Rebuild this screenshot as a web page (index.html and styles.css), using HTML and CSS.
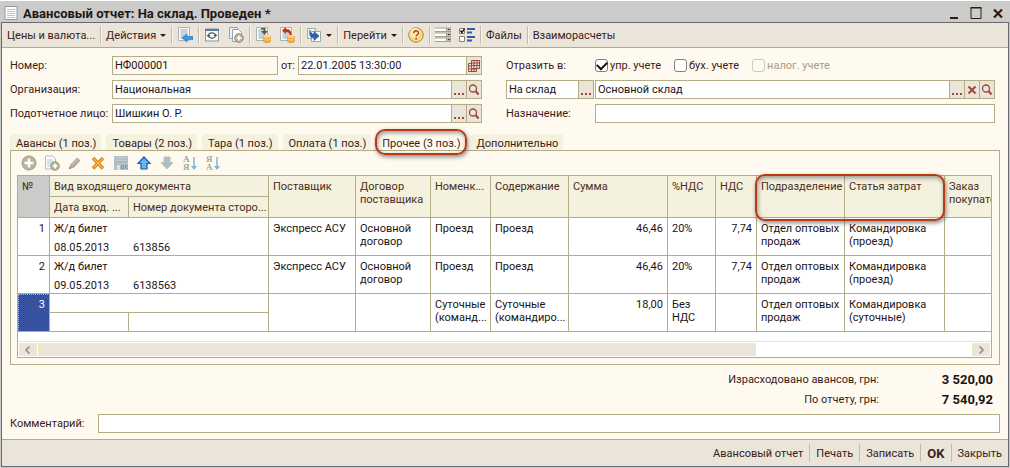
FILE: index.html
```
<!DOCTYPE html>
<html lang="ru">
<head>
  <meta charset="UTF-8">
  <meta name="viewport" content="width=device-width, initial-scale=1.0">
  <title>Авансовый отчет</title>
  <link rel="stylesheet" href="styles.css">
</head>
<body>
  <!-- Shared icons -->
  <svg class="sprite" aria-hidden="true">
    <symbol id="icon-search" viewBox="0 0 14 14">
      <circle cx="6" cy="5.500" r="3.500" fill="none" stroke="#9a4a3c" stroke-width="1.300"/>
      <path d="M8.500 8l3 3.500" stroke="#9a4a3c" stroke-width="2"/>
    </symbol>
    <symbol id="icon-dots" viewBox="0 0 14 14">
      <path d="M2 10h2v2H2zM6 10h2v2H6zM10 10h2v2h-2z" fill="#9a4a3c"/>
    </symbol>
    <symbol id="icon-sheet" viewBox="0 0 16 16">
      <path d="M1.500 .5h11v13h-11z" fill="#fdfdf8" stroke="#a9b3b5"/>
      <path d="M3.500 3h7M3.500 5h7M3.500 7h7M3.500 9h7M3.500 11h7" stroke="#8fa6b0"/>
    </symbol>
    <symbol id="icon-coins" viewBox="0 0 8 8">
      <path d="M.5 1.500v4.500c0 2 7 2 7 0V1.500z" fill="#f5a83a" stroke="#d98a24" stroke-width=".6"/>
      <path d="M.5 3.500c0 2 7 2 7 0" fill="none" stroke="#fbd68c"/>
      <ellipse cx="4" cy="1.700" rx="3.500" ry="1.400" fill="#fcd27c"/>
    </symbol>
  </svg>

  <!-- Title bar -->
  <header class="title-bar">
    <svg class="title-icon" viewBox="0 0 14 16">
      <path d="M1 1.500h12v13H1z" fill="#fff" stroke="#8d9ba0"/>
      <path d="M3 4.500h8M3 6.500h8M3 8.500h8M3 10.500h8M3 12.500h8" stroke="#a9cbd8"/>
    </svg>
    <h1>Авансовый отчет: На склад. Проведен *</h1>
    <div class="window-buttons">
      <button type="button" aria-label="Свернуть">
        <svg viewBox="0 0 12 12"><path d="M2 10h8v2H2z" fill="#341811"/></svg>
      </button>
      <button type="button" aria-label="Развернуть">
        <svg viewBox="0 0 12 12"><path d="M1 .5h10v11H1z" fill="none" stroke="#341811"/><path d="M.5 1h11" stroke="#341811"/></svg>
      </button>
      <button type="button" aria-label="Закрыть окно">
        <svg viewBox="0 0 12 12"><path d="M2 2.500l8 8M10 2.500l-8 8" stroke="#341811" stroke-width="2.200"/></svg>
      </button>
    </div>
  </header>

  <main class="window">
    <!-- Toolbar -->
    <nav class="toolbar">
      <div class="tool-group"><button type="button">Цены и валюта...</button></div>
      <div class="tool-group"><button type="button" class="menu">Действия</button></div>
      <div class="tool-group">
        <button type="button" aria-label="Перейти к документу">
          <svg viewBox="0 0 16 16"><use href="#icon-sheet"/><path d="M5 11l5-4v2.500h6v3h-6V15z" fill="#3f95dc" stroke="#2474b8" stroke-width=".6"/></svg>
        </button>
      </div>
      <div class="tool-group">
        <button type="button" aria-label="Обновить">
          <svg viewBox="0 0 16 16"><path d="M1.500 2h13v12h-13z" fill="#f6f8f4" stroke="#8096a0"/><path d="M1 3h14" stroke="#5b7c96" stroke-width="2"/><path d="M4.500 8c.5-2.500 5-3 6.500-.5M11.500 9c-.5 2.500-5 3-6.500 .5" fill="none" stroke="#45586a" stroke-width="1.200"/><path d="M2.500 8h4L4.500 10.500zM9.500 9h4l-2-2.500z" fill="#45586a"/></svg>
        </button>
        <button type="button" aria-label="Скопировать">
          <svg viewBox="0 0 16 16"><path d="M1.500 .5h8v11h-8z" fill="#eef3f2" stroke="#8ea6b2"/><path d="M4.500 2.500h6l3 3v9h-9z" fill="#fafcf8" stroke="#8ea6b2"/><circle cx="11" cy="11" r="4.300" fill="#bdb69a" stroke="#8e8a70"/><path d="M11 8.500v5M8.500 11h5" stroke="#fff" stroke-width="1.700"/></svg>
        </button>
      </div>
      <div class="tool-group">
        <button type="button" aria-label="Провести">
          <svg viewBox="0 0 16 16"><use href="#icon-sheet"/><path d="M6 1h4.500v3H13l-3.500 4L6 4h2.500V2.500H6z" fill="#5c5b5c"/><use href="#icon-coins" x="8" y="8" width="8" height="8"/></svg>
        </button>
        <button type="button" aria-label="Отменить проведение">
          <svg viewBox="0 0 16 16"><use href="#icon-sheet"/><path d="M3 3.500L7 0v2.300c4 0 5.500 2 5.500 5.700h-2C10.500 6 9.500 5 7 5v2z" fill="#c9300f"/><use href="#icon-coins" x="8" y="8" width="8" height="8"/></svg>
        </button>
      </div>
      <div class="tool-group">
        <button type="button" class="menu" aria-label="Ввести на основании">
          <svg viewBox="0 0 16 16"><path d="M1.500 1.500h8v10h-8z" fill="#f2f5f2" stroke="#9aa9ac"/><path d="M5.500 4.500h9v10h-9z" fill="#fdfdfa" stroke="#9aa9ac"/><path d="M4 3c0 3 1 4 4 4V4.500L13 9l-5 4.500V11C4.500 11 3 8 4 3z" fill="#2f62b4" stroke="#23498a" stroke-width=".6"/></svg>
        </button>
      </div>
      <div class="tool-group"><button type="button" class="menu">Перейти</button></div>
      <div class="tool-group">
        <button type="button" aria-label="Справка">
          <svg viewBox="0 0 16 16"><circle cx="8" cy="8" r="7.300" fill="#fbd67c" stroke="#a58b55"/><circle cx="7" cy="6" r="5" fill="#fdeab5"/><path d="M5.700 6.200c0-3.200 4.800-3 4.800-.3 0 1.700-2.300 1.700-2.300 3.600" fill="none" stroke="#b05a28" stroke-width="1.600"/><path d="M7.300 10.800h1.800v1.700H7.300z" fill="#b05a28"/></svg>
        </button>
      </div>
      <div class="tool-group">
        <button type="button" aria-label="Настройка списка">
          <svg viewBox="0 0 16 16"><path d="M0 .5h16v4.500H0zM0 5.500h16V10H0zM0 10.500h16V15H0z" fill="#a09d91"/><path d="M0 1.500h11v2.500H0zM0 6.500h11V9H0zM0 11.500h11V14H0z" fill="#fff"/><path d="M12 1.500h3v2.500h-3zM12 6.500h3V9h-3zM12 11.500h3V14h-3z" fill="#d5d2c6"/><path d="M12.500 2h2.500L13.700 3.500zM12.500 7h2.500l-1.300 1.500zM12.500 12h2.500l-1.300 1.500z" fill="#222"/></svg>
        </button>
        <button type="button" aria-label="Настройка полей">
          <svg viewBox="0 0 16 16"><path d="M.5 1.500h5v5h-5zM.5 9.500h5v5h-5z" fill="#fff" stroke="#8a8678"/><path d="M1.500 3.500l1.500 2 2.500-4" fill="none" stroke="#111" stroke-width="1.400"/><path d="M8 1h8v2H8zM8 4.500h5v2H8zM8 9h8v2H8zM8 12.500h5v2H8z" fill="#2d5bb5"/></svg>
        </button>
      </div>
      <div class="tool-group"><button type="button">Файлы</button></div>
      <div class="tool-group"><button type="button">Взаиморасчеты</button></div>
    </nav>

    <!-- Document header -->
    <form class="form">
      <div class="form-column">
        <div class="form-row">
          <label class="caption" for="number">Номер:</label>
          <div class="field readonly"><input type="text" id="number" value="НФ000001" readonly></div>
          <label class="from" for="date">от:</label>
          <div class="field date">
            <input type="text" id="date" value="22.01.2005 13:30:00">
            <button type="button" aria-label="Календарь">
              <svg viewBox="0 0 14 14"><path d="M4.500 1.500h8v8h-8zM4.500 4h8M4.500 6.500h8M7 1.500v8M10 1.500v8M1.500 4.500v8h8v-3M1.500 7h3M1.500 10h8M4.500 9.500v3M7 9.500v3M1.500 4.500h3" fill="none" stroke="#9a4a3c"/></svg>
            </button>
          </div>
        </div>
        <div class="form-row">
          <label class="caption" for="company">Организация:</label>
          <div class="field">
            <input type="text" id="company" value="Национальная">
            <button type="button" aria-label="Выбрать"><svg><use href="#icon-dots"/></svg></button>
            <button type="button" aria-label="Открыть"><svg><use href="#icon-search"/></svg></button>
          </div>
        </div>
        <div class="form-row">
          <label class="caption" for="person">Подотчетное лицо:</label>
          <div class="field">
            <input type="text" id="person" value="Шишкин О. Р.">
            <button type="button" aria-label="Выбрать"><svg><use href="#icon-dots"/></svg></button>
            <button type="button" aria-label="Открыть"><svg><use href="#icon-search"/></svg></button>
          </div>
        </div>
      </div>

      <div class="form-column right">
        <div class="form-row">
          <span class="caption">Отразить в:</span>
          <div class="checks">
            <label class="check"><input type="checkbox" checked>упр. учете</label>
            <label class="check"><input type="checkbox">бух. учете</label>
            <label class="check"><input type="checkbox" disabled>налог. учете</label>
          </div>
        </div>
        <div class="form-row">
          <div class="field kind">
            <input type="text" value="На склад" aria-label="Вид приемника">
            <button type="button" aria-label="Выбрать"><svg><use href="#icon-dots"/></svg></button>
          </div>
          <div class="field">
            <input type="text" value="Основной склад" aria-label="Склад">
            <button type="button" aria-label="Выбрать"><svg><use href="#icon-dots"/></svg></button>
            <button type="button" aria-label="Очистить"><svg viewBox="0 0 14 14"><path d="M3.500 3.500l7 7M10.500 3.500l-7 7" stroke="#9a4a3c" stroke-width="2"/></svg></button>
            <button type="button" aria-label="Открыть"><svg><use href="#icon-search"/></svg></button>
          </div>
        </div>
        <div class="form-row">
          <label class="caption" for="purpose">Назначение:</label>
          <div class="field"><input type="text" id="purpose"></div>
        </div>
      </div>
    </form>

    <!-- Tabs -->
    <div class="tabs" role="tablist">
      <button type="button" role="tab">Авансы (1 поз.)</button>
      <button type="button" role="tab">Товары (2 поз.)</button>
      <button type="button" role="tab">Тара (1 поз.)</button>
      <button type="button" role="tab">Оплата (1 поз.)</button>
      <button type="button" role="tab" class="active" aria-selected="true">Прочее (3 поз.)<span class="mark"></span></button>
      <button type="button" role="tab">Дополнительно</button>
    </div>

    <section class="panel">
      <div class="table-tools">
        <button type="button" aria-label="Добавить">
          <svg viewBox="0 0 16 16"><circle cx="8" cy="8" r="7" fill="#bab59a" stroke="#a09d86"/><path d="M8 3.500v9M3.500 8h9" stroke="#fff" stroke-width="2.500"/></svg>
        </button>
        <button type="button" aria-label="Скопировать строку">
          <svg viewBox="0 0 16 16"><path d="M1.500 1h7l3 3v10h-10z" fill="#fff" stroke="#a5bdc8"/><path d="M3 5h6M3 7h6M3 9h4M3 11h3" stroke="#a9c8d8"/><circle cx="11" cy="11" r="4.300" fill="#b9b498" stroke="#97937c"/><path d="M11 8.500v5M8.500 11h5" stroke="#fff" stroke-width="1.700"/></svg>
        </button>
        <button type="button" aria-label="Изменить">
          <svg viewBox="0 0 16 16"><path d="M2 14l1-4 7-7.500 3.500 3L6.500 13z" fill="#b0ab92"/><path d="M4.500 10.500l6-6.500" stroke="#d2ceba"/><path d="M2 14l.5-2 1.500 1.500z" fill="#77735f"/></svg>
        </button>
        <button type="button" aria-label="Удалить">
          <svg viewBox="0 0 16 16"><path d="M3 3l10 10.500M13 3L3 13.500" stroke="#d98018" stroke-width="3.400"/><path d="M3.500 3.500L12.500 13M12.500 3.500l-9 9.500" stroke="#f9b44c" stroke-width="1.500"/></svg>
        </button>
        <button type="button" aria-label="Закончить редактирование">
          <svg viewBox="0 0 16 16"><path d="M1 1h14v14H1z" fill="#b0c0c6"/><path d="M3 2h10v5H3z" fill="#c8cfcc"/><path d="M3 4h10M3 6.500h10" stroke="#9db0b9"/><path d="M4 10h3v5H4z" fill="#dfe3dd"/><path d="M8.500 10.500h2v3h-2zM12.500 10v4M15 10l-2.500 2 2.500 2" fill="none" stroke="#8299a6"/></svg>
        </button>
        <button type="button" aria-label="Вверх">
          <svg viewBox="0 0 16 16"><path d="M8 2l6 6.500h-3V14H5V8.500H2z" fill="#66b6f4" stroke="#2458a0" stroke-width="1.200"/></svg>
        </button>
        <button type="button" aria-label="Вниз">
          <svg viewBox="0 0 16 16"><path d="M8 14l6-6.500h-3V2H5v5.500H2z" fill="#aebfc4" stroke="#b9c2bd"/></svg>
        </button>
        <button type="button" aria-label="Сортировать по возрастанию">
          <svg viewBox="0 0 16 16"><text x="1" y="7" class="sort-blue">А</text><text x="1" y="15" class="sort-sand">Я</text><path d="M12 2v10" stroke="#82b4d4" stroke-width="1.500"/><path d="M9 11h6l-3 4z" fill="#82b4d4"/></svg>
        </button>
        <button type="button" aria-label="Сортировать по убыванию">
          <svg viewBox="0 0 16 16"><text x="1" y="7" class="sort-sand">Я</text><text x="1" y="15" class="sort-sand">А</text><path d="M12 2v10" stroke="#82b4d4" stroke-width="1.500"/><path d="M9 11h6l-3 4z" fill="#82b4d4"/></svg>
        </button>
      </div>

      <div class="table-box">
        <table>
          <colgroup>
            <col class="c-num"><col class="c-date"><col class="c-doc"><col class="c-supplier"><col class="c-contract">
            <col class="c-item"><col class="c-content"><col class="c-sum"><col class="c-rate"><col class="c-vat">
            <col class="c-unit"><col class="c-cost"><col>
          </colgroup>
          <thead>
            <tr>
              <th rowspan="2" class="current">№</th>
              <th colspan="2">Вид входящего документа</th>
              <th rowspan="2">Поставщик</th>
              <th rowspan="2">Договор поставщика</th>
              <th rowspan="2">Номенк...</th>
              <th rowspan="2">Содержание</th>
              <th rowspan="2">Сумма</th>
              <th rowspan="2">%НДС</th>
              <th rowspan="2">НДС</th>
              <th rowspan="2" class="marked">Подразделение<span class="mark"></span></th>
              <th rowspan="2">Статья затрат</th>
              <th rowspan="2">Заказ покупателя</th>
            </tr>
            <tr class="subheads">
              <th>Дата вход. ...</th>
              <th>Номер документа сторо...</th>
            </tr>
          </thead>
          <tbody>
            <tr>
              <td rowspan="2" class="number">1</td>
              <td colspan="2" class="open">Ж/д билет</td>
              <td rowspan="2">Экспресс АСУ</td>
              <td rowspan="2">Основной договор</td>
              <td rowspan="2">Проезд</td>
              <td rowspan="2">Проезд</td>
              <td rowspan="2" class="number">46,46</td>
              <td rowspan="2">20%</td>
              <td rowspan="2" class="number">7,74</td>
              <td rowspan="2">Отдел оптовых продаж</td>
              <td rowspan="2">Командировка (проезд)</td>
              <td rowspan="2"></td>
            </tr>
            <tr><td class="joined">08.05.2013</td><td>613856</td></tr>
            <tr>
              <td rowspan="2" class="number">2</td>
              <td colspan="2" class="open">Ж/д билет</td>
              <td rowspan="2">Экспресс АСУ</td>
              <td rowspan="2">Основной договор</td>
              <td rowspan="2">Проезд</td>
              <td rowspan="2">Проезд</td>
              <td rowspan="2" class="number">46,46</td>
              <td rowspan="2">20%</td>
              <td rowspan="2" class="number">7,74</td>
              <td rowspan="2">Отдел оптовых продаж</td>
              <td rowspan="2">Командировка (проезд)</td>
              <td rowspan="2"></td>
            </tr>
            <tr><td class="joined">09.05.2013</td><td>6138563</td></tr>
            <tr>
              <td rowspan="2" class="number selected">3</td>
              <td colspan="2"></td>
              <td rowspan="2"></td>
              <td rowspan="2"></td>
              <td rowspan="2">Суточные (команд...</td>
              <td rowspan="2">Суточные (командиро...</td>
              <td rowspan="2" class="number">18,00</td>
              <td rowspan="2">Без НДС</td>
              <td rowspan="2"></td>
              <td rowspan="2">Отдел оптовых продаж</td>
              <td rowspan="2">Командировка (суточные)</td>
              <td rowspan="2"></td>
            </tr>
            <tr><td></td><td></td></tr>
          </tbody>
        </table>
        <div class="scrollbar">
          <button type="button" aria-label="Влево"><svg viewBox="0 0 8 8"><path d="M5.500 .5L2 4l3.500 3.500" fill="none" stroke="#a0917f" stroke-width="1.700"/></svg></button>
          <div class="track"><div class="thumb"></div></div>
          <button type="button" aria-label="Вправо"><svg viewBox="0 0 8 8"><path d="M2.500 .5L6 4 2.500 7.500" fill="none" stroke="#a0917f" stroke-width="1.700"/></svg></button>
        </div>
      </div>
    </section>

    <!-- Totals -->
    <dl class="totals">
      <dt>Израсходовано авансов, грн:</dt><dd>3 520,00</dd>
      <dt>По отчету, грн:</dt><dd>7 540,92</dd>
    </dl>

    <div class="comment">
      <label for="comment">Комментарий:</label>
      <div class="field"><input type="text" id="comment"></div>
    </div>

    <!-- Bottom commands -->
    <footer class="commands">
      <button type="button">Авансовый отчет</button>
      <button type="button">Печать</button>
      <button type="button">Записать</button>
      <button type="button" class="default">OK</button>
      <button type="button">Закрыть</button>
    </footer>
  </main>
</body>
</html>
```
FILE: styles.css
```
/* General Styles */
* {
  box-sizing: border-box;
}

body {
  display: flex;
  flex-direction: column;
  min-height: 100vh;
  margin: 0;
  background-color: #cbcbc9;
  color: #3a2018;
  font-family: Roboto, 'Liberation Sans', sans-serif;
  font-size: 11px;
  line-height: 13px;
}

button,
input {
  margin: 0;
  padding: 0;
  border: none;
  background: none;
  color: inherit;
  font: inherit;
}

svg {
  display: block;
  flex: none;
}

.sprite {
  position: absolute;
  width: 0;
  height: 0;
}

/* Title bar */
.title-bar {
  display: flex;
  align-items: center;
  height: 22px;
  padding: 3px 6px 0 4px;
  border-top: 1px solid #fff;
}

.title-icon {
  width: 14px;
  height: 16px;
}

.title-bar h1 {
  flex: 1;
  margin: 0 0 0 5px;
  font-size: 13px;
  color: #231815;
}

.window-buttons {
  display: flex;
  gap: 10px;
}

.window-buttons svg {
  width: 12px;
  height: 12px;
}

.window {
  display: flex;
  flex-direction: column;
  flex: 1;
  margin: 0 1px 1px;
  border: 1px solid #6b6775;
  background-color: #fffaf0;
}

/* Toolbar */
.toolbar {
  display: flex;
  align-items: center;
  height: 25px;
  border-bottom: 1px solid #b3ac86;
  background-color: #ebe4d9;
}

.tool-group {
  display: flex;
  align-items: center;
  gap: 8px;
  height: 18px;
  padding: 0 5px;
  border-right: 1px solid #c2bcaa;
  box-shadow: 1px 0 #faf7f0;
}

.tool-group:last-child {
  border-right: none;
  box-shadow: none;
}

.tool-group svg {
  width: 16px;
  height: 16px;
}

.menu {
  display: flex;
  align-items: center;
  gap: 4px;
}

.menu::after {
  content: '';
  border: 3px solid transparent;
  border-top-color: #341811;
  border-bottom: none;
}

/* Document header */
.form {
  display: grid;
  grid-template-columns: 472fr 489fr;
  gap: 24px;
  padding: 8px 13px 11px 8px;
}

.form-column {
  display: flex;
  flex-direction: column;
  gap: 5px;
}

.form-row {
  display: flex;
  align-items: center;
  height: 19px;
}

.caption {
  flex: none;
  width: 102px;
}

.right .caption {
  width: 89px;
}

.field {
  display: flex;
  flex: 1;
  min-width: 0;
  height: 19px;
  border: 1px solid #b3ac86;
  background-color: #fff;
  color: #1c1414;
}

.field input {
  flex: 1;
  min-width: 0;
  padding: 0 2px;
  outline: none;
}

.field button {
  display: flex;
  align-items: center;
  justify-content: center;
  width: 15px;
  border-left: 1px solid #b3ac86;
  background-color: #ebe4d9;
}

.field button svg {
  width: 14px;
  height: 14px;
}

.readonly {
  background-color: #fffaf0;
}

.from {
  padding: 0 3px;
}

.date {
  flex: none;
  width: 184px;
}

.kind {
  flex: none;
  width: 88px;
  margin-right: 1px;
}

.checks {
  display: flex;
  gap: 13px;
}

.check {
  display: flex;
  align-items: center;
  gap: 2px;
}

.check input {
  display: grid;
  place-items: center;
  width: 13px;
  height: 13px;
  border: 1px solid #8a7f70;
  border-radius: 3px;
  background-color: #fff;
  appearance: none;
}

.check input:checked::before {
  content: '';
  width: 8px;
  height: 5px;
  border: solid #221410;
  border-width: 0 0 2px 2px;
  transform: translateY(-1px) rotate(-45deg);
}

.check:has(input:disabled) {
  color: #a99c80;
}

.check input:disabled {
  border-color: #cfc9b8;
  background-color: #fffaf0;
}

/* Tabs */
.tabs {
  display: flex;
  gap: 5px;
  padding: 0 8px;
}

.tabs button {
  height: 16px;
  padding: 2px 5px 0 6px;
  border-radius: 3px 3px 0 0;
  background-color: #f4f1de;
}

.tabs .active {
  position: relative;
  background: none;
}

.mark {
  position: absolute;
  border: 2px solid #b93a12;
  border-radius: 10px;
  box-shadow: 1px 2px 4px rgba(60, 60, 60, 0.6), inset 1px 2px 4px rgba(60, 60, 60, 0.5);
  pointer-events: none;
}

.tabs .mark {
  inset: -5px -1px -5px -1px;
}

/* Panel with the table */
.panel {
  display: flex;
  flex-direction: column;
  flex: 1;
  margin: 0 8px;
  padding: 0 7px 6px 6px;
  border: 1px solid #b3ac86;
}

.table-tools {
  display: flex;
  align-items: center;
  gap: 7px;
  height: 24px;
  padding-left: 4px;
}

.table-tools svg {
  width: 16px;
  height: 16px;
}

.sort-blue,
.sort-sand {
  font-family: 'Liberation Serif', serif;
  font-size: 9px;
  font-weight: bold;
  fill: #7ba8c4;
}

.sort-sand {
  fill: #aaa58c;
}

.table-box {
  display: flex;
  flex-direction: column;
  flex: 1;
  border: 1px solid #b3ac86;
  background-color: #fff;
}

table {
  width: 100%;
  border-spacing: 0;
  table-layout: fixed;
}

.c-num { width: 32px; }
.c-date { width: 79px; }
.c-doc { width: 140px; }
.c-supplier { width: 87px; }
.c-contract { width: 75px; }
.c-item { width: 60px; }
.c-content { width: 78px; }
.c-sum { width: 99px; }
.c-rate { width: 48px; }
.c-vat { width: 41px; }
.c-unit { width: 88px; }
.c-cost { width: 100px; }

th,
td {
  height: 19px;
  padding: 4px 4px 0;
  overflow: hidden;
  border-right: 1px solid #b3ac86;
  border-bottom: 1px solid #b3ac86;
  color: #1c1414;
  text-align: left;
  vertical-align: top;
}

th {
  height: 21px;
  background-color: #f4f1de;
  color: #4a2c20;
  font-weight: normal;
}

th:last-child,
tr:nth-child(odd) td:last-child {
  border-right: none;
}

.subheads th {
  padding-right: 0;
  white-space: nowrap;
}

.subheads th:last-child {
  border-right: 1px solid #b3ac86;
}

.current {
  background-color: #cbcbc9;
}

.number {
  text-align: right;
}

.open {
  border-bottom: none;
}

.joined {
  border-right: none;
}

.selected {
  background-color: #3752a0;
  color: #fff;
  outline: 1px dotted #d9a26c;
  outline-offset: -1px;
}

.marked {
  position: relative;
  overflow: visible;
}

/* Spans this column and the next one */
.marked .mark {
  top: -2px;
  left: -2px;
  width: 190px;
  height: 47px;
}

.scrollbar {
  display: flex;
  gap: 1px;
  height: 16px;
  margin-top: auto;
  padding: 1px;
  border-top: 1px solid #ebe4d9;
}

.scrollbar button {
  display: flex;
  align-items: center;
  justify-content: center;
  width: 18px;
  border: 1px solid #efeac0;
  background-color: #ebe4d9;
}

.scrollbar svg {
  width: 8px;
  height: 8px;
}

.track {
  flex: 1;
}

.thumb {
  width: 77%;
  height: 100%;
  border: 1px solid #efeac0;
  background-color: #ebe4d9;
}

/* Totals */
.totals {
  display: grid;
  grid-template-columns: 1fr 114px;
  row-gap: 4px;
  margin: 7px 15px 6px 8px;
  line-height: 16px;
  text-align: right;
}

.totals dd {
  margin: 0;
  color: #1c1414;
  font-size: 13px;
  font-weight: bold;
}

.comment {
  display: flex;
  align-items: center;
  margin: 0 8px 6px;
}

.comment label {
  width: 88px;
}

/* Bottom commands */
.commands {
  display: flex;
  align-items: center;
  justify-content: flex-end;
  height: 27px;
  border-top: 1px solid #b3ac86;
  background-color: #ebe4d9;
}

.commands button {
  height: 18px;
  padding: 0 6px;
  border-left: 1px solid #c2bcaa;
}

.commands button:first-child {
  border-left: none;
}

.commands .default {
  font-size: 13px;
  font-weight: bold;
}
```
